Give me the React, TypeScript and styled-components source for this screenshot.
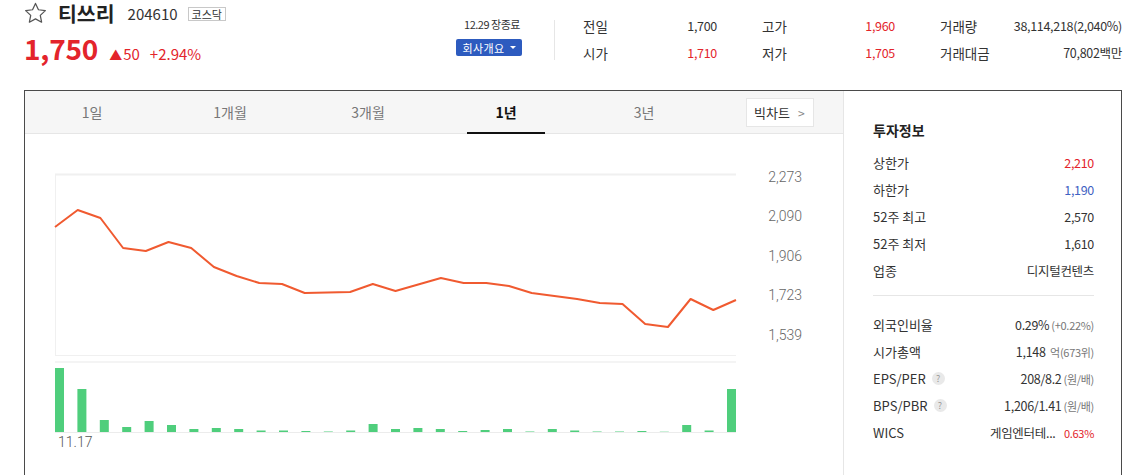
import * as React from 'react';
import styled, { createGlobalStyle } from 'styled-components';

const GlobalStyle = createGlobalStyle`
    body {
        margin: 0;
        background: #fff;
        font-family: 'Noto Sans CJK KR', 'Noto Sans', sans-serif;
        color: #333;
    }
`;

const RED = '#e3242b';
const BLUE = '#3f62c2';

const Page = styled.div`
    width: 1126px;
    height: 475px;
    overflow: hidden;
`;

const Header = styled.div`
    display: flex;
    height: 90px;
    padding-left: 24px;
    box-sizing: border-box;
`;

const TitleBlock = styled.div`
    width: 432px;
`;

const NameRow = styled.div`
    display: flex;
    align-items: center;
    height: 24px;
    margin-top: 1px;
`;

const Name = styled.span`
    margin-left: 11px;
    font-size: 20.5px;
    font-weight: 700;
    color: #222;
    line-height: 1;
`;

const Code = styled.span`
    margin-left: 13px;
    font-size: 15px;
    line-height: 1;
    color: #333;
`;

const Badge = styled.span`
    margin-left: 10px;
    margin-top: 2px;
    border: 1px solid #c8c8c8;
    padding: 0 3px;
    font-size: 11px;
    line-height: 12px;
    color: #333;
`;

const PriceRow = styled.div`
    display: flex;
    align-items: baseline;
    margin-top: 7px;
    color: ${RED};
`;

const Price = styled.span`
    font-size: 28px;
    font-weight: 700;
    line-height: 32px;
    letter-spacing: -0.2px;
`;

const Change = styled.span<{ gap?: number }>`
    margin-left: ${(p) => p.gap ?? 0}px;
    font-size: 15px;
`;

const Tri = styled.span`
    margin-left: 11px;
    margin-right: 1px;
    font-size: 13px;
`;

const StatusBlock = styled.div`
    width: 66px;
    padding-top: 16px;
    display: flex;
    flex-direction: column;
    align-items: center;
`;

const Status = styled.span`
    font-size: 11px;
    letter-spacing: -0.5px;
    color: #333;
    margin-left: 6px;
`;

const InfoButton = styled.span`
    margin-top: 7px;
    display: flex;
    align-items: center;
    gap: 5px;
    height: 17px;
    padding: 0 6px;
    background: #2d5bbf;
    color: #fff;
    font-size: 11px;
    letter-spacing: 0.4px;
    border-radius: 2px;
    white-space: nowrap;
`;

const Caret = styled.span`
    width: 0;
    height: 0;
    border-left: 3px solid transparent;
    border-right: 3px solid transparent;
    border-top: 3px solid #fff;
`;

const Divider = styled.div`
    margin: 20px 0 0 32px;
    width: 1px;
    height: 40px;
    background: #e6e6e6;
`;

const QuoteGrid = styled.div`
    margin: 12px 0 0 28px;
    display: grid;
    grid-template-columns: 134px 133px 182px;
    column-gap: 45px;
    grid-auto-rows: 27px;
    align-items: center;
`;

const Pair = styled.div`
    display: flex;
    justify-content: space-between;
    align-items: center;
`;

const PairLabel = styled.span`
    font-size: 13.5px;
    color: #333;
`;

const PairValue = styled.span<{ red?: boolean }>`
    font-size: 12.5px;
    letter-spacing: -0.3px;
    color: ${(p) => (p.red ? RED : '#333')};
`;

const ChartBox = styled.div`
    margin-left: 24px;
    width: 1098px;
    height: 400px;
    border: 1px solid #4a4a4a;
    box-sizing: border-box;
    display: flex;
`;

const LeftPanel = styled.div`
    width: 818px;
    display: flex;
    flex-direction: column;
`;

const TabBar = styled.div`
    display: flex;
    align-items: center;
    height: 43px;
    background: #f6f6f6;
    border-bottom: 1px solid #e6e6e6;
    box-sizing: border-box;
`;

const Tab = styled.div<{ active?: boolean }>`
    position: relative;
    width: 138px;
    height: 100%;
    display: flex;
    align-items: center;
    justify-content: center;
    font-size: 14px;
    color: ${(p) => (p.active ? '#111' : '#777')};
    font-weight: ${(p) => (p.active ? 700 : 400)};
    &:first-child {
        margin-left: -2px;
    }
    &::after {
        content: '';
        display: ${(p) => (p.active ? 'block' : 'none')};
        position: absolute;
        left: 30px;
        right: 30px;
        bottom: -1px;
        height: 2px;
        background: #111;
    }
`;

const BigChartButton = styled.div`
    margin-left: 33px;
    height: 29px;
    padding: 0 8px 0 7px;
    display: flex;
    align-items: center;
    gap: 8px;
    background: #fff;
    border: 1px solid #e6e6e6;
    box-sizing: border-box;
    font-size: 13px;
    color: #333;
`;

const Chevron = styled.span`
    color: #888;
    font-size: 12px;
`;

const RightPanel = styled.div`
    flex: 1;
    border-left: 1px solid #e6e6e6;
    padding: 28px 27px 0 29px;
`;

const PanelTitle = styled.div`
    font-size: 14px;
    font-weight: 700;
    color: #222;
    height: 22px;
    line-height: 22px;
    margin-bottom: 8px;
`;

const InfoRow = styled.div`
    display: flex;
    justify-content: space-between;
    align-items: center;
    height: 27px;
`;

const InfoLabel = styled.span`
    display: flex;
    align-items: center;
    gap: 6px;
    font-size: 13px;
    color: #333;
`;

const InfoValue = styled.span<{ tone?: 'red' | 'blue' }>`
    font-size: 12.5px;
    letter-spacing: -0.3px;
    color: ${(p) => (p.tone === 'red' ? RED : p.tone === 'blue' ? BLUE : '#333')};
`;

const Sub = styled.span<{ red?: boolean }>`
    font-size: 11px;
    color: ${(p) => (p.red ? RED : '#777')};
    margin-left: 2px;
`;

const Help = styled.span`
    width: 13px;
    height: 13px;
    border-radius: 50%;
    background: #e9e9e9;
    color: #999;
    font-size: 9px;
    display: inline-flex;
    align-items: center;
    justify-content: center;
`;

const Rule = styled.div`
    height: 1px;
    background: #e6e6e6;
    margin: 11px 0 15px;
`;

const prices = [227, 210, 218, 248, 251, 242, 248, 267, 276, 283, 284, 293, 292.5, 292, 284, 291, 284.5, 278, 283, 283, 286, 293, 296, 299, 303, 304, 324, 327, 299, 310, 300];
const volumes = [64, 43, 12, 5, 11, 7, 3, 4, 3, 1.5, 1.5, 1, 0.5, 1.5, 8, 3, 4, 3, 1, 2, 3, 0.5, 3, 1.5, 0.5, 0.5, 1, 0.3, 7, 1.5, 43];
const yLabels = [
    { v: '2,273', y: 177 },
    { v: '2,090', y: 216 },
    { v: '1,906', y: 256 },
    { v: '1,723', y: 295 },
    { v: '1,539', y: 335 },
];

function StarIcon() {
    return (
        <svg width="23" height="22" viewBox="0 0 24 23">
            <path d="M12 1.5l3.1 6.6 7.2.9-5.3 5 1.4 7.1L12 17.6l-6.4 3.5 1.4-7.1-5.3-5 7.2-.9z" fill="none" stroke="#555" strokeWidth="1.3" strokeLinejoin="round" />
        </svg>
    );
}

function PriceChart() {
    const x0 = 55;
    const x1 = 736;
    const step = (x1 - x0) / (prices.length - 1);
    const line = prices.map((y, i) => `${(x0 + i * step).toFixed(1)},${y}`).join(' ');
    const barStep = (x1 - x0 - 9) / (volumes.length - 1);
    return (
        <svg width="818" height="341" viewBox="25 134 818 341">
            <line x1={x0} y1={174.5} x2={x1} y2={174.5} stroke="#f0f0f0" strokeWidth="2" />
            <line x1={x0 + 0.5} y1={174} x2={x0 + 0.5} y2={355} stroke="#f0f0f0" strokeWidth="1" />
            <line x1={x0} y1={355.5} x2={x1} y2={355.5} stroke="#f0f0f0" strokeWidth="1" />
            <line x1={x0} y1={362} x2={x1} y2={362} stroke="#f0f0f0" strokeWidth="1.5" />
            <polyline points={line} fill="none" stroke="#f05a30" strokeWidth="2" strokeLinejoin="round" />
            {yLabels.map((l) => (
                <text key={l.v} x={802} y={l.y + 5} textAnchor="end" fontFamily="Roboto, sans-serif" fontWeight={300} fontSize="14" fill="#666">
                    {l.v}
                </text>
            ))}
            {volumes.map((h, i) => (
                <rect key={i} x={x0 + i * barStep} y={432 - h} width={9} height={h} fill="#4fce7c" />
            ))}
            <line x1={x0} y1={432.5} x2={x1} y2={432.5} stroke="#ececec" strokeWidth="1" />
            <text x={58} y={447} fontFamily="Roboto, sans-serif" fontWeight={300} fontSize="14" fill="#555">
                11.17
            </text>
        </svg>
    );
}

const tabs = ['1일', '1개월', '3개월', '1년', '3년'];

export default function App() {
    return (
        <Page>
            <GlobalStyle />
            <Header>
                <TitleBlock>
                    <NameRow>
                        <StarIcon />
                        <Name>티쓰리</Name>
                        <Code>204610</Code>
                        <Badge>코스닥</Badge>
                    </NameRow>
                    <PriceRow>
                        <Price>1,750</Price>
                        <Tri>▲</Tri>
                        <Change>50</Change>
                        <Change gap={10}>+2.94%</Change>
                    </PriceRow>
                </TitleBlock>
                <StatusBlock>
                    <Status>12.29 장종료</Status>
                    <InfoButton>
                        회사개요 <Caret />
                    </InfoButton>
                </StatusBlock>
                <Divider />
                <QuoteGrid>
                    <Pair>
                        <PairLabel>전일</PairLabel>
                        <PairValue>1,700</PairValue>
                    </Pair>
                    <Pair>
                        <PairLabel>고가</PairLabel>
                        <PairValue red>1,960</PairValue>
                    </Pair>
                    <Pair>
                        <PairLabel>거래량</PairLabel>
                        <PairValue>38,114,218(2,040%)</PairValue>
                    </Pair>
                    <Pair>
                        <PairLabel>시가</PairLabel>
                        <PairValue red>1,710</PairValue>
                    </Pair>
                    <Pair>
                        <PairLabel>저가</PairLabel>
                        <PairValue red>1,705</PairValue>
                    </Pair>
                    <Pair>
                        <PairLabel>거래대금</PairLabel>
                        <PairValue>70,802백만</PairValue>
                    </Pair>
                </QuoteGrid>
            </Header>
            <ChartBox>
                <LeftPanel>
                    <TabBar>
                        {tabs.map((t) => (
                            <Tab key={t} active={t === '1년'}>
                                {t}
                            </Tab>
                        ))}
                        <BigChartButton>
                            빅차트 <Chevron>&gt;</Chevron>
                        </BigChartButton>
                    </TabBar>
                    <PriceChart />
                </LeftPanel>
                <RightPanel>
                    <PanelTitle>투자정보</PanelTitle>
                    <InfoRow>
                        <InfoLabel>상한가</InfoLabel>
                        <InfoValue tone="red">2,210</InfoValue>
                    </InfoRow>
                    <InfoRow>
                        <InfoLabel>하한가</InfoLabel>
                        <InfoValue tone="blue">1,190</InfoValue>
                    </InfoRow>
                    <InfoRow>
                        <InfoLabel>52주 최고</InfoLabel>
                        <InfoValue>2,570</InfoValue>
                    </InfoRow>
                    <InfoRow>
                        <InfoLabel>52주 최저</InfoLabel>
                        <InfoValue>1,610</InfoValue>
                    </InfoRow>
                    <InfoRow>
                        <InfoLabel>업종</InfoLabel>
                        <InfoValue>디지털컨텐츠</InfoValue>
                    </InfoRow>
                    <Rule />
                    <InfoRow>
                        <InfoLabel>외국인비율</InfoLabel>
                        <InfoValue>
                            0.29%<Sub>(+0.22%)</Sub>
                        </InfoValue>
                    </InfoRow>
                    <InfoRow>
                        <InfoLabel>시가총액</InfoLabel>
                        <InfoValue>
                            1,148 <Sub>억(673위)</Sub>
                        </InfoValue>
                    </InfoRow>
                    <InfoRow>
                        <InfoLabel>
                            EPS/PER <Help>?</Help>
                        </InfoLabel>
                        <InfoValue>
                            208/8.2<Sub>(원/배)</Sub>
                        </InfoValue>
                    </InfoRow>
                    <InfoRow>
                        <InfoLabel>
                            BPS/PBR <Help>?</Help>
                        </InfoLabel>
                        <InfoValue>
                            1,206/1.41<Sub>(원/배)</Sub>
                        </InfoValue>
                    </InfoRow>
                    <InfoRow>
                        <InfoLabel>WICS</InfoLabel>
                        <InfoValue>
                            게임엔터테...<Sub red>&nbsp;&nbsp;&nbsp;0.63%</Sub>
                        </InfoValue>
                    </InfoRow>
                </RightPanel>
            </ChartBox>
        </Page>
    );
}
